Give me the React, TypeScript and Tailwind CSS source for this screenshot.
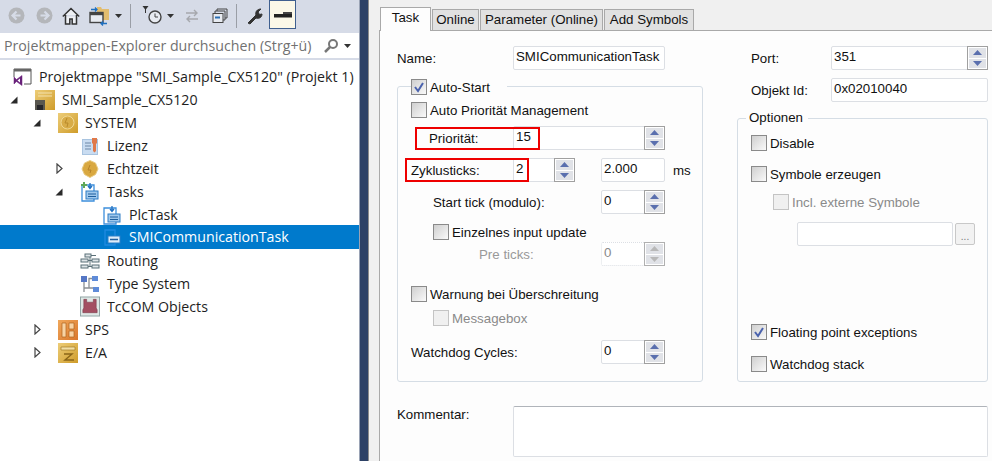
import React from "react";

const formFont = { fontFamily: '"Liberation Sans", Arial, sans-serif' };

// --- tree icons ---
const Arrow = ({ open }: { open?: boolean }) =>
  open ? (
    <svg width="8" height="8" viewBox="0 0 8 8">
      <path d="M7.500 .5v7H.5z" fill="#2a2a2a" />
    </svg>
  ) : (
    <svg width="7" height="11" viewBox="0 0 7 11">
      <path d="M1 1l5 4.500L1 10z" fill="#fff" stroke="#444" strokeWidth="1.200" />
    </svg>
  );

const Gold = ({ kind }: { kind: string }) => (
  <svg width="20" height="20" viewBox="0 0 20 20">
    <defs>
      <linearGradient id={`g-${kind}`} x1="0" y1="0" x2="1" y2="1">
        <stop offset="0" stopColor={kind === "sps" ? "#f0a85c" : "#edcd78"} />
        <stop offset="1" stopColor={kind === "sps" ? "#d9762a" : "#cf9c2a"} />
      </linearGradient>
    </defs>
    <rect width="20" height="20" fill={`url(#g-${kind})`} />
    {kind === "system" && (
      <>
        <circle cx="9.500" cy="9.500" r="6.500" fill="#d8ac48" stroke="#f0d894" />
        <path d="M9 5l-2 5h3l-1 4" fill="none" stroke="#b98a2a" />
      </>
    )}
    {kind === "solution" && (
      <>
        <path d="M3 3h14M3 6h14" stroke="#f4e2ae" />
        <path d="M0 10h10v10H0z" fill="#59574f" />
        <path d="M2 15h6v5H2z" fill="#26262a" />
      </>
    )}
    {kind === "sps" && (
      <path d="M4 3h4v14H4zM11 3h5v6h-5zM11 11h5v6h-5z" fill="#f8d3a4" stroke="#b0641f" strokeWidth=".7" />
    )}
    {kind === "ea" && (
      <>
        <path d="M3 4h14v3H3z" fill="#f3dfa4" stroke="#93701f" strokeWidth=".6" />
        <path d="M6 11h8l-7 6h9" fill="none" stroke="#8a6518" strokeWidth="1.400" />
      </>
    )}
  </svg>
);

const Lizenz = () => (
  <svg width="17" height="18" viewBox="0 0 17 18">
    <rect x=".5" y="2.500" width="15" height="15" fill="#c9dcf1" stroke="#a9c4e0" />
    <path d="M3 6h6M3 9h6M3 12h6" stroke="#6c87a6" />
    <path d="M10 1h5v5l-1 1v7l-1.500 1.500L11 14V7l-1-1z" fill="#e0794a" />
  </svg>
);

const Echtzeit = () => (
  <svg width="18" height="18" viewBox="0 0 18 18">
    <path d="M9 .5l5.500 2.500L17 9l-2.500 5.500L9 17.500l-5.500-3L1 9l2.500-6z" fill="#d9a840" stroke="#e8cb85" />
    <path d="M9 5L7 10h3l-1 3" stroke="#b5822a" fill="none" />
  </svg>
);

const TaskIcon = ({ plus, white }: { plus?: boolean; white?: boolean }) =>
  white ? (
    <svg width="20" height="20" viewBox="0 0 20 20">
      <path d="M3 3h10v15H3z" fill="none" stroke="#1f8ae0" strokeWidth="1.300" />
      <rect x="6" y="9" width="12" height="7" fill="#dcecf9" stroke="#2b7fc8" />
      <path d="M8 12.500h8" stroke="#1f5f9e" strokeWidth="1.500" />
    </svg>
  ) : (
    <svg width="20" height="20" viewBox="0 0 20 20">
      <path d="M2 3h12v16H2z" fill="#fff" stroke="#3c8fdc" strokeWidth="1.300" />
      <rect x="6" y="9" width="12" height="8" fill="#9fc8ec" stroke="#2f7cc4" />
      <path d="M8 12h8M8 14.500h8" stroke="#1f5f9e" />
      <path d="M10 1v5M8 4l2 2.500L12 4" fill="none" stroke="#1f6fc0" strokeWidth="1.300" />
      {plus && <path d="M4 0v6M1 3h6" stroke="#5fa85a" strokeWidth="2" />}
    </svg>
  );

const Routing = () => (
  <svg width="20" height="16" viewBox="0 0 20 16">
    <rect x="5" y="1" width="6" height="3" fill="#dfe5e8" stroke="#5b7078" />
    <rect x="1" y="6" width="7" height="3" fill="#dfe5e8" stroke="#5b7078" />
    <rect x="12" y="6" width="7" height="3" fill="#dfe5e8" stroke="#5b7078" />
    <rect x="1" y="12" width="7" height="3" fill="#dfe5e8" stroke="#5b7078" />
    <rect x="12" y="12" width="7" height="3" fill="#dfe5e8" stroke="#5b7078" />
    <path d="M11 2.500h5M10 4v10M8 7.500h4M8 13.500h4" stroke="#5b7078" fill="none" />
  </svg>
);

const TypeSystem = () => (
  <svg width="20" height="18" viewBox="0 0 20 18">
    <rect x="1" y="1" width="6" height="6" fill="#5577c5" />
    <rect x="12" y="1" width="6" height="5" fill="#5f8bd8" />
    <rect x="13" y="12" width="6" height="5" fill="#5f8bd8" />
    <path d="M4 7v6h9M12 3.500H9v9M4 13v4" stroke="#8a8f93" fill="none" strokeWidth="1.300" />
  </svg>
);

const TcCom = () => (
  <svg width="21" height="21" viewBox="0 0 21 21">
    <rect x=".5" y=".5" width="20" height="20" fill="#dfe8e6" stroke="#8fa3a3" />
    <path d="M4 3h3v3h7V3h3v9l1 2v3H3v-3l1-2z" fill="#a34f62" stroke="#7c3a4a" strokeWidth=".6" />
  </svg>
);

const SolutionIcon = () => (
  <svg width="19" height="18" viewBox="0 0 19 18">
    <path d="M1 9V1h17v15H11" fill="#fff" stroke="#555" />
    <path d="M1 1h17v2.500H1z" fill="#666" />
    <path d="M1 9l2.500 2.500L9 7.500v10l-5.500-4L1 16z" fill="#68217a" stroke="#68217a" strokeWidth=".5" />
    <path d="M4.500 12.500L7 10.500v4z" fill="#fff" />
  </svg>
);

type TreeRow = { label: string; level: number; arrow?: "open" | "closed"; icon: React.ReactNode; selected?: boolean };

const treeData: TreeRow[] = [
  { label: 'Projektmappe "SMI_Sample_CX5120" (Projekt 1)', level: 0, icon: <SolutionIcon /> },
  { label: "SMI_Sample_CX5120", level: 1, arrow: "open", icon: <Gold kind="solution" /> },
  { label: "SYSTEM", level: 2, arrow: "open", icon: <Gold kind="system" /> },
  { label: "Lizenz", level: 3, icon: <Lizenz /> },
  { label: "Echtzeit", level: 3, arrow: "closed", icon: <Echtzeit /> },
  { label: "Tasks", level: 3, arrow: "open", icon: <TaskIcon plus /> },
  { label: "PlcTask", level: 4, icon: <TaskIcon /> },
  { label: "SMICommunicationTask", level: 4, icon: <TaskIcon white />, selected: true },
  { label: "Routing", level: 3, icon: <Routing /> },
  { label: "Type System", level: 3, icon: <TypeSystem /> },
  { label: "TcCOM Objects", level: 3, icon: <TcCom /> },
  { label: "SPS", level: 2, arrow: "closed", icon: <Gold kind="sps" /> },
  { label: "E/A", level: 2, arrow: "closed", icon: <Gold kind="ea" /> },
];

const indent = ["w-[39px]", "w-[62px]", "w-[85px]", "w-[107px]", "w-[129px]"];

function Tree() {
  return (
    <div className="flex-1 bg-white pt-[5px]" style={{ fontFamily: '"Open Sans", sans-serif' }}>
      {treeData.map((row) => (
        <div
          key={row.label}
          className={`flex items-center text-[14.2px] whitespace-nowrap ${
            row.selected ? "-mt-px h-[24px] bg-[#007acc] text-white" : "h-[23px] text-[#1e1e1e]"
          }`}
        >
          <div className={`relative flex shrink-0 items-center justify-end pr-[7px] ${indent[row.level]}`}>
            <div className="flex w-[20px] items-center justify-center">{row.icon}</div>
            {row.arrow && (
              <span className="absolute left-[calc(100%-53px)] flex w-[10px] justify-center">
                <Arrow open={row.arrow === "open"} />
              </span>
            )}
          </div>
          <span>{row.label}</span>
        </div>
      ))}
    </div>
  );
}

const Caret = ({ className }: { className?: string }) => (
  <svg className={className} width="7" height="4" viewBox="0 0 7 4"><path d="M0 0h7L3.500 4z" fill="#333" /></svg>
);

function Toolbar() {
  return (
    <div className="flex h-[33px] items-center bg-[#d6dbe7] pb-[2px] pl-[8px]">
      <svg width="17" height="17" viewBox="0 0 17 17"><circle cx="8.500" cy="8.500" r="8" fill="#b4b6ba" /><path d="M4.500 8.500h8M8.500 4.500l-4 4 4 4" stroke="#d6dbe7" strokeWidth="2.200" fill="none" /></svg>
      <svg className="ml-[11px]" width="17" height="17" viewBox="0 0 17 17"><circle cx="8.500" cy="8.500" r="8" fill="#b4b6ba" /><path d="M4.500 8.500h8M8.500 4.500l4 4-4 4" stroke="#d6dbe7" strokeWidth="2.200" fill="none" /></svg>
      <svg className="ml-[9px]" width="18" height="18" viewBox="0 0 18 18"><path d="M.8 9.500L9 1.500l8.200 8M3.500 8v9h4.300v-5h2.400v5h4.300V8" fill="#eef0f4" stroke="#333" strokeWidth="1.500" /></svg>
      <svg className="ml-[9px]" width="20" height="20" viewBox="0 0 20 20"><path d="M8 1h4l1 2h7v11h-6V7H8z" fill="#e3bd6f" /><rect x="1" y="6.500" width="13" height="10" fill="#e8ebf1" stroke="#444" strokeWidth="1.400" /><path d="M1 8h13" stroke="#444" strokeWidth="2.400" /><path d="M2 3.500h6M6 1.500l2 2-2 2M12 17.500h6M14 15.500l-2 2 2 2" stroke="#1e6fc0" strokeWidth="1.300" fill="none" /></svg>
      <Caret className="ml-[6px]" />
      <div className="ml-[8px] h-[24px] w-px bg-[#9a9ea6]" />
      <svg className="ml-[11px]" width="24" height="20" viewBox="0 0 24 20"><path d="M.5 0h6L3.500 4z" fill="#333" /><path d="M3.500 3v4" stroke="#333" /><circle cx="13" cy="11" r="6" fill="#e8ebf1" stroke="#444" strokeWidth="1.400" /><path d="M13 7.500V11h3" stroke="#444" fill="none" /></svg>
      <Caret className="ml-[1px]" />
      <svg className="ml-[10px]" width="16" height="16" viewBox="0 0 16 16"><path d="M2 5h11M10 2l3 3-3 3M14 11H3M6 8l-3 3 3 3" stroke="#a6a8ad" strokeWidth="1.400" fill="none" /></svg>
      <svg className="ml-[12px]" width="16" height="16" viewBox="0 0 16 16"><path d="M5 3V1h10v9h-2" fill="none" stroke="#444" /><path d="M3 5V3h10v9h-2" fill="none" stroke="#444" /><rect x="1" y="5.500" width="10" height="9" fill="#e8ebf1" stroke="#444" /><path d="M3 9.500h5" stroke="#2a6fb5" strokeWidth="2" /></svg>
      <div className="ml-[8px] h-[24px] w-px bg-[#9a9ea6]" />
      <svg className="ml-[9px]" width="18" height="18" viewBox="0 0 18 18"><path d="M2 16l8-8c-1-3 1-6 5-6l-3 3 1.500 2.500L16 7c0 3.500-3 5-6 4l-6 6z" fill="#333" stroke="#333" /></svg>
      <div className="ml-[5px] flex h-[29px] w-[27px] items-center justify-center self-start border border-[#3f5f8f] bg-[#fbf8e8]">
        <svg width="20" height="6" viewBox="0 0 20 6"><path d="M10 0h9v2H10z" fill="#444" /><path d="M1 2h18v3.500H1z" fill="#222" /></svg>
      </div>
    </div>
  );
}

function SearchBox() {
  return (
    <div className="mb-[2px] flex h-[25px] items-center bg-white pl-[4px] pr-[8px] text-[14.2px] text-[#717171]" style={{ fontFamily: '"Open Sans", sans-serif' }}>
      <span className="flex-1 whitespace-nowrap">Projektmappen-Explorer durchsuchen (Strg+ü)</span>
      <svg width="16" height="16" viewBox="0 0 16 16"><circle cx="10" cy="6" r="4" fill="none" stroke="#777" strokeWidth="2" /><path d="M7 9l-5 5" stroke="#777" strokeWidth="2.500" /></svg>
      <Caret className="ml-[5px]" />
    </div>
  );
}

// --- form controls ---
function Check({ checked, disabled, label, className = "" }: { checked?: boolean; disabled?: boolean; label: string; className?: string }) {
  return (
    <div className={`flex h-[16px] items-center ${className}`}>
      <span className={`flex h-[16px] w-[16px] shrink-0 items-center justify-center border ${disabled ? "border-[#c4c4c4] bg-[#f0f0f0]" : "border-[#8a8a8a] bg-gradient-to-br from-[#cfcfcf] to-[#fafafa]"}`}>
        {checked && (
          <svg width="12" height="12" viewBox="0 0 12 12"><path d="M2 6l3 4 5-8" fill="none" stroke="#4a62ad" strokeWidth="2" /></svg>
        )}
      </span>
      <span className={`ml-[3px] pt-[2px] whitespace-nowrap ${disabled ? "text-[#8a8a8a]" : ""}`}>{label}</span>
    </div>
  );
}

function Spinner({ disabled }: { disabled?: boolean }) {
  const fill = disabled ? "#b8b8b8" : "#5a6fae";
  return (
    <div className={`-my-px -mr-px flex w-[21px] shrink-0 flex-col gap-px border p-px ${disabled ? "border-[#b0b0b0]" : "border-[#a0a0a0]"} bg-white`}>
      {[0, 1].map((i) => (
        <div key={i} className="flex flex-1 items-center justify-center bg-[#e0e2e7]">
          <svg width="9" height="5" viewBox="0 0 9 5">
            <path d={i === 0 ? "M4.500 0L9 5H0z" : "M0 0h9L4.500 5z"} fill={fill} />
          </svg>
        </div>
      ))}
    </div>
  );
}

function Field({ value, spin, disabled, className = "" }: { value: string; spin?: boolean; disabled?: boolean; className?: string }) {
  return (
    <div className={`flex h-[24px] items-stretch rounded-[2px] border border-[#dcdfe4] bg-white ${disabled ? "text-[#8a8a8a]" : ""} ${className}`}>
      <span className="flex-1 pl-[2px] leading-[20px] whitespace-nowrap">{value}</span>
      {spin && <Spinner disabled={disabled} />}
    </div>
  );
}

function Tab({ label, active, className }: { label: string; active?: boolean; className: string }) {
  return (
    <div
      className={`flex items-center justify-center border border-[#a9a9a9] ${className} ${
        active ? "relative z-10 -mb-px h-[24px] border-b-0 bg-[#fdfdfd] pb-[4px]" : "h-[21px] border-b-0 bg-[#e1e1e1]"
      }`}
    >
      {label}
    </div>
  );
}

function TaskForm() {
  return (
    <div className="flex min-w-0 flex-1 flex-col border-l border-[#8c8c8c] bg-[#f0f0f0] pl-[10px] pt-[7px] text-[13.3px] text-[#111]" style={formFont}>
      <div className="flex h-[24px] items-end gap-[1px] border-b border-[#a9a9a9] pl-[1px]">
        <Tab label="Task" active className="w-[51px]" />
        <Tab label="Online" className="w-[47px]" />
        <Tab label="Parameter (Online)" className="w-[123px]" />
        <Tab label="Add Symbols" className="w-[90px]" />
      </div>

      <div className="flex flex-1 flex-col border-l border-[#a9a9a9] bg-[#fdfdfd] pl-[17px] pr-[4px] pt-[15px]">
        <div className="flex gap-[34px]">
          {/* left column */}
          <div className="flex w-[306px] shrink-0 flex-col">
            <div className="flex h-[24px] items-center">
              <span className="w-[116px] pt-[2px]">Name:</span>
              <Field value="SMICommunicationTask" className="w-[152px]" />
            </div>
            <div className="mt-[16px] h-[296px] rounded-[3px] border border-[#d5dde5] pl-[13px]">
              <Check checked label="Auto-Start" className="-mt-[8px] w-[96px] bg-[#fdfdfd]" />

              <Check label="Auto Priorität Management" className="mt-[7px]" />

              <div className="mt-[8px] flex h-[24px] items-center">
                <span className="w-[102px] pl-[18px] pt-[2px]">Priorität:</span>
                <Field value="15" spin className="w-[152px]" />
              </div>

              <div className="mt-[8px] flex h-[24px] items-center">
                <span className="w-[102px] pt-[2px]">Zyklusticks:</span>
                <Field value="2" spin className="w-[62px]" />
                <Field value="2.000" className="ml-[26px] w-[64px]" />
                <span className="ml-[8px] pt-[2px]">ms</span>
              </div>

              <div className="mt-[8px] flex h-[24px] items-center pl-[22px]">
                <span className="w-[168px] pt-[2px]">Start tick (modulo):</span>
                <Field value="0" spin className="w-[64px]" />
              </div>

              <Check label="Einzelnes input update" className="mt-[10px] ml-[22px]" />

              <div className="mt-[2px] flex h-[24px] items-center pl-[68px]">
                <span className="w-[122px] pt-[2px] text-[#999]">Pre ticks:</span>
                <Field value="0" spin disabled className="w-[64px] border-dotted border-[#a8a8a8]" />
              </div>

              <Check label="Warnung bei Überschreitung" className="mt-[20px]" />
              <Check disabled label="Messagebox" className="mt-[8px] ml-[22px]" />

              <div className="mt-[14px] flex h-[24px] items-center">
                <span className="w-[190px] pt-[2px]">Watchdog Cycles:</span>
                <Field value="0" spin className="w-[64px]" />
              </div>
            </div>
          </div>

          {/* right column */}
          <div className="flex w-[251px] shrink-0 flex-col">
            <div className="flex h-[24px] items-center pl-[14px]">
              <span className="w-[80px] pt-[2px]">Port:</span>
              <Field value="351" spin className="w-[157px]" />
            </div>
            <div className="mt-[8px] flex h-[24px] items-center pl-[14px]">
              <span className="w-[80px] pt-[2px]">Objekt Id:</span>
              <Field value="0x02010040" className="w-[157px]" />
            </div>
            <div className="mt-[16px] flex h-[264px] flex-col rounded-[3px] border border-[#d5dde5] pl-[13px]">
              <span className="-mt-[9px] -ml-[5px] h-[16px] w-[62px] bg-[#fdfdfd] pl-[3px] leading-[16px]">Optionen</span>
              <Check label="Disable" className="mt-[9px]" />
              <Check label="Symbole erzeugen" className="mt-[15px]" />
              <Check disabled label="Incl. externe Symbole" className="mt-[12px] ml-[22px]" />
              <div className="mt-[12px] ml-[46px] flex items-center">
                <Field value="" className="w-[156px] border-[#b8b8b8]" />
                <div className="ml-[2px] flex h-[22px] w-[20px] items-end justify-center rounded-[2px] border border-[#c8c8c8] bg-[#f2f2f2] text-[10px] leading-[14px] text-[#777]">...</div>
              </div>
              <Check checked label="Floating point exceptions" className="mt-[78px]" />
              <Check label="Watchdog stack" className="mt-[16px]" />
            </div>
          </div>
        </div>

        <div className="mt-[24px] flex">
          <span className="w-[116px] pt-[1px] leading-[16px]">Kommentar:</span>
          <div className="h-[51px] w-[476px] rounded-[2px] border border-[#dcdfe4] border-t-[#b0b4ba] bg-white" />
        </div>
      </div>
    </div>
  );
}

export default function App() {
  return (
    <div className="relative flex h-[461px] w-[992px] overflow-hidden bg-white">
      <div className="flex w-[359px] shrink-0 flex-col bg-[#d6dbe7]">
        <Toolbar />
        <SearchBox />
        <Tree />
      </div>
      <div className="w-[9px] shrink-0 border-l border-[#9aa3b5] bg-[#2d4166]" />
      <TaskForm />
      {/* red annotations drawn over the dialog */}
      <div className="pointer-events-none absolute left-[415px] top-[127px] h-[23px] w-[125px] border-[2px] border-[#ee0000]" />
      <div className="pointer-events-none absolute left-[405px] top-[158px] h-[24px] w-[124px] border-[2px] border-[#ee0000]" />
    </div>
  );
}
